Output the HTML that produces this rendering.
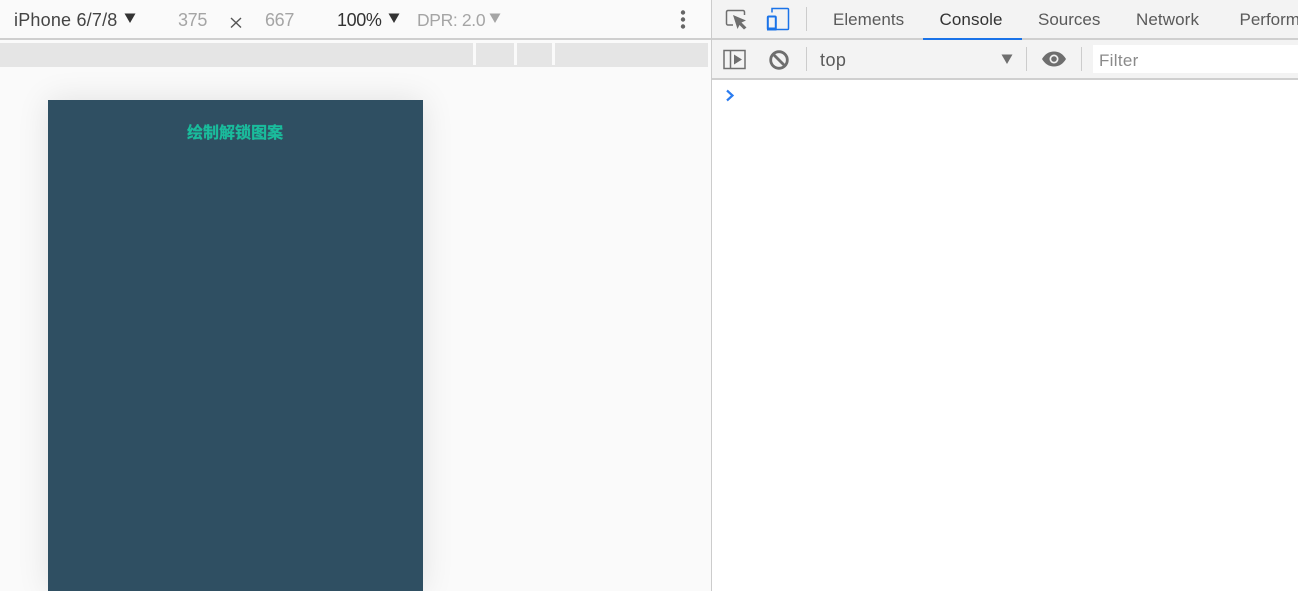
<!DOCTYPE html>
<html><head><meta charset="utf-8"><style>
html,body{margin:0;padding:0;width:1298px;height:591px;overflow:hidden;background:#fafafa;font-family:"Liberation Sans","Noto Sans CJK SC",sans-serif}
div,span{position:absolute;white-space:nowrap}
.t{font-size:17px;line-height:20px;top:10px}
svg{position:absolute}
</style></head><body>
<div style="left:0;top:0;width:711px;height:591px;background:#fafafa;overflow:hidden">
<div style="left:0;top:38px;width:711px;height:2px;background:#cfcfcf"></div>
<div style="left:0;top:43px;width:708px;height:24px;background:#e5e5e5"></div>
<div style="left:473px;top:43px;width:3px;height:22px;background:#fafafa"></div>
<div style="left:514px;top:43px;width:3px;height:22px;background:#fafafa"></div>
<div style="left:552px;top:43px;width:3px;height:22px;background:#fafafa"></div>
<span class="t" style="left:14px;color:#444;font-size:18px;letter-spacing:.2px">iPhone 6/7/8</span>
<svg style="left:124px;top:13px" width="12" height="11"><path d="M0.5 0.5H11.500L6 10Z" fill="#333"/></svg>
<span class="t" style="left:178px;color:#a5a5a5;font-size:18px;letter-spacing:-.35px">375</span>
<svg style="left:229px;top:16px" width="14" height="13"><path d="M2 2L12 11.500M12 2L2 11.500" stroke="#555" stroke-width="1.400" fill="none"/></svg>
<span class="t" style="left:265px;color:#a5a5a5;font-size:18px;letter-spacing:-.35px">667</span>
<span class="t" style="left:337px;color:#333;font-size:18px;letter-spacing:-.4px">100%</span>
<svg style="left:388px;top:13px" width="12" height="11"><path d="M0.500 0.500H11.500L6 10Z" fill="#333"/></svg>
<span class="t" style="left:417px;color:#a5a5a5;font-size:17.500px;letter-spacing:-.35px">DPR: 2.0</span>
<svg style="left:489px;top:13px" width="12" height="11"><path d="M0.500 0.500H11.500L6 10Z" fill="#a5a5a5"/></svg>
<svg style="left:678px;top:9px" width="10" height="22"><circle cx="5" cy="3.500" r="2.200" fill="#666"/><circle cx="5" cy="10.500" r="2.200" fill="#666"/><circle cx="5" cy="17.500" r="2.200" fill="#666"/></svg>
<div style="left:48px;top:100px;width:375px;height:491px;background:#2f4f62;box-shadow:0 0 30px rgba(0,0,0,.1)"></div>
<span style="left:187px;top:123px;font-size:16px;line-height:21px;font-weight:700;color:#1abc9c;letter-spacing:.02px;-webkit-text-stroke:.3px #1abc9c">绘制解锁图案</span>
</div>
<div style="left:711px;top:0;width:1px;height:591px;background:#ccc"></div>
<div style="left:712px;top:0;width:586px;height:591px;background:#fff;overflow:hidden">
<div style="left:0;top:0;width:586px;height:38px;background:#f3f3f3"></div>
<div style="left:0;top:38px;width:586px;height:2px;background:#cfcfcf"></div>
<div style="left:0;top:40px;width:586px;height:38px;background:#f3f3f3"></div>
<div style="left:0;top:78px;width:586px;height:2px;background:#cfcfcf"></div>
<svg style="left:12px;top:8px" width="26" height="24"><path d="M9 17H4a1.500 1.500 0 0 1-1.500-1.500V4A1.500 1.500 0 0 1 4 2.500H19A1.500 1.500 0 0 1 20.500 4V7" fill="none" stroke="#6e6e6e" stroke-width="1.500"/><path d="M9 7L22 12.500L17.500 14.500L22.500 19.500L20 21.500L15.500 17L13.500 21Z" fill="#6e6e6e"/></svg>
<svg style="left:53px;top:6px" width="26" height="26"><path d="M7 6.500V2.500H22.500A1 1 0 0 1 23.500 3.500V22.500A1 1 0 0 1 22.500 23.500H11" fill="none" stroke="#1a73e8" stroke-width="1.500"/><rect x="2.800" y="10.500" width="8" height="13" rx="1" fill="none" stroke="#1a73e8" stroke-width="2"/><rect x="2" y="21.500" width="9.500" height="3" fill="#1a73e8"/></svg>
<div style="left:94px;top:7px;width:1px;height:24px;background:#ccc"></div>
<span class="t" style="left:121px;color:#5a5a5a;letter-spacing:.03px">Elements</span>
<span class="t" style="left:227.500px;color:#333;letter-spacing:.1px">Console</span>
<div style="left:210.500px;top:38px;width:99px;height:2px;background:#1a73e8"></div>
<span class="t" style="left:326px;color:#5a5a5a">Sources</span>
<span class="t" style="left:424px;color:#5a5a5a;letter-spacing:.1px">Network</span>
<span class="t" style="left:527.500px;color:#5a5a5a">Performance</span>
<svg style="left:11px;top:49px" width="26" height="22"><rect x="1" y="1.500" width="21" height="18" fill="none" stroke="#6e6e6e" stroke-width="1.500"/><path d="M7.500 1.500V19.500" stroke="#6e6e6e" stroke-width="1.500"/><path d="M11 5.500L19 10.500L11 15.500Z" fill="#6e6e6e"/></svg>
<svg style="left:56px;top:49px" width="22" height="22"><circle cx="11" cy="11" r="8.300" fill="none" stroke="#6e6e6e" stroke-width="2.800"/><path d="M5 5L17 17" stroke="#6e6e6e" stroke-width="2.800"/></svg>
<div style="left:94px;top:47px;width:1px;height:24px;background:#ccc"></div>
<span class="t" style="left:108px;top:50px;color:#5a5a5a;font-size:18px;letter-spacing:.45px">top</span>
<svg style="left:289px;top:54px" width="12" height="11"><path d="M0.500 0.500H11.500L6 10Z" fill="#6e6e6e"/></svg>
<div style="left:314px;top:47px;width:1px;height:24px;background:#ccc"></div>
<svg style="left:329px;top:49px" width="26" height="20"><path d="M1 10C4 5 8 2.500 13 2.500S22 5 25 10C22 15 18 17.500 13 17.500S4 15 1 10Z" fill="#6e6e6e"/><circle cx="13" cy="10" r="4.500" fill="#f3f3f3"/><circle cx="13" cy="10" r="2.800" fill="#6e6e6e"/></svg>
<div style="left:369px;top:47px;width:1px;height:24px;background:#ccc"></div>
<div style="left:381px;top:45px;width:205px;height:28px;background:#fff"></div>
<span class="t" style="left:387px;top:51px;color:#8a8a8a;letter-spacing:.3px">Filter</span>
<svg style="left:13px;top:89px" width="12" height="13"><path d="M2 1.500L7.500 6.500L2 11.500" fill="none" stroke="#2b7cf0" stroke-width="2.200"/></svg>
</div>
</body></html>
